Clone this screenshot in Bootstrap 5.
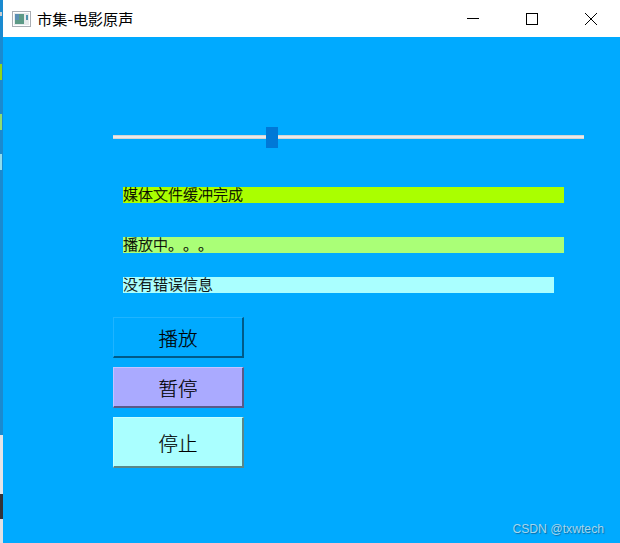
<!doctype html>
<html lang="zh"><head><meta charset="utf-8">
<link href="https://cdn.jsdelivr.net/npm/bootstrap@5.3.0/dist/css/bootstrap.min.css" rel="stylesheet">
<style>
html,body{height:100%;margin:0;overflow:hidden;background:#0af}
body{font-family:"Noto Sans CJK SC","Liberation Sans",sans-serif;color:#000;font-weight:300;text-spacing-trim:space-all}
.shell{height:543px;width:620px}
.edge{width:3px;background:#1a8ad0;position:relative}
.edge i{position:absolute;left:0;width:2px;display:block}
.winpane{min-width:0}
.titlebar{height:37px;background:#fff;font-size:15.2px;font-weight:400;padding-left:9px}
.appicon{margin-right:6px}
.ctl{width:59px;height:37px}
.stage{background:#0af;padding:0 0 0 110px}
.slider{height:21px;margin-top:90px;width:471px;position:relative}
.track{height:4px;background:#e9e9e9;border-top:1px solid #d4d4d4;border-bottom:1px solid #d4d4d4;position:absolute;left:0;right:0;top:8px}
.thumb{position:absolute;left:153px;top:0;width:12px;height:21px;background:#0078d7}
.status{height:16px;margin-left:10px;font-size:15px;line-height:13px;white-space:nowrap;width:441px;-webkit-text-stroke:.25px #000}
.s1{background:#af0;margin-top:39px}
.s2{background:#af7;margin-top:34px}
.s3{background:#aff;margin-top:24px;width:431px}
.pbtn{display:block;width:131px;padding:2px 0 0;border-radius:0;font-size:19.5px;line-height:1;font-weight:300;color:#000;border:1px solid;border-right-width:2px;border-bottom-width:2px;-webkit-text-stroke:.2px #000}
.pbtn:hover{color:#000}
.b1{height:41px;margin-top:24px;background:#0af;border-color:#1fb4ff #005a88 #005a88 #1fb4ff}
.b2{height:41px;margin-top:9px;background:#aaf;border-color:#c4c4ff #5a5a88 #5a5a88 #c4c4ff}
.b3{height:51px;margin-top:9px;background:#aff;border-color:#c8ffff #5a8888 #5a8888 #c8ffff}
.mark-wm{position:absolute;right:16px;bottom:7px;font:12.2px "Liberation Sans",sans-serif;color:#a3d6ee;text-shadow:1px 1px 1px #0a6ea8}
</style></head><body>
<div class="shell d-flex position-relative">
  <div class="edge flex-shrink-0">
    <i style="top:12px;height:4px;background:#c8ccd0"></i>
    <i style="top:64px;height:16px;background:#8fd61a"></i>
    <i style="top:114px;height:16px;background:#8fdc70"></i>
    <i style="top:154px;height:16px;background:#90dcec"></i>
    <i style="top:435px;height:59px;width:3px;background:#e4e4e8"></i>
    <i style="top:494px;height:25px;width:3px;background:#33333a"></i>
    <i style="top:519px;height:24px;width:3px;background:#e0e0e4"></i>
  </div>
  <div class="winpane flex-grow-1 d-flex flex-column">
    <div class="titlebar d-flex align-items-center flex-shrink-0">
      <svg class="appicon" width="19" height="16" viewBox="0 0 19 16"><rect x=".5" y=".5" width="18" height="15" fill="#fff" stroke="#a9aeb4"/><rect x="2" y="2" width="15" height="12" fill="#e6eaec"/><rect x="3" y="3" width="9" height="10" fill="#5d9a86"/><rect x="3" y="3" width="4" height="6" fill="#5c8fb4"/><rect x="14" y="4" width="2" height="5" fill="#4f94ae"/></svg>
      <span class="flex-grow-1">市集-电影原声</span>
      <div class="d-flex">
        <div class="ctl d-flex align-items-center justify-content-center"><svg width="12" height="12"><path d="M0 5.5h12" stroke="#000"/></svg></div>
        <div class="ctl d-flex align-items-center justify-content-center"><svg width="12" height="12"><rect x=".5" y=".5" width="11" height="11" fill="none" stroke="#000"/></svg></div>
        <div class="ctl d-flex align-items-center justify-content-center"><svg width="12" height="12"><path d="M0 0l12 12M12 0L0 12" stroke="#000"/></svg></div>
      </div>
    </div>
    <div class="stage flex-grow-1">
      <div class="slider"><div class="track"></div><div class="thumb"></div></div>
      <div class="status s1">媒体文件缓冲完成</div>
      <div class="status s2">播放中。。。</div>
      <div class="status s3">没有错误信息</div>
      <button class="btn pbtn b1">播放</button>
      <button class="btn pbtn b2">暂停</button>
      <button class="btn pbtn b3">停止</button>
    </div>
  </div>
  <div class="mark-wm">CSDN @txwtech</div>
</div>
<script src="https://cdn.jsdelivr.net/npm/bootstrap@5.3.0/dist/js/bootstrap.bundle.min.js"></script>
</body></html>
